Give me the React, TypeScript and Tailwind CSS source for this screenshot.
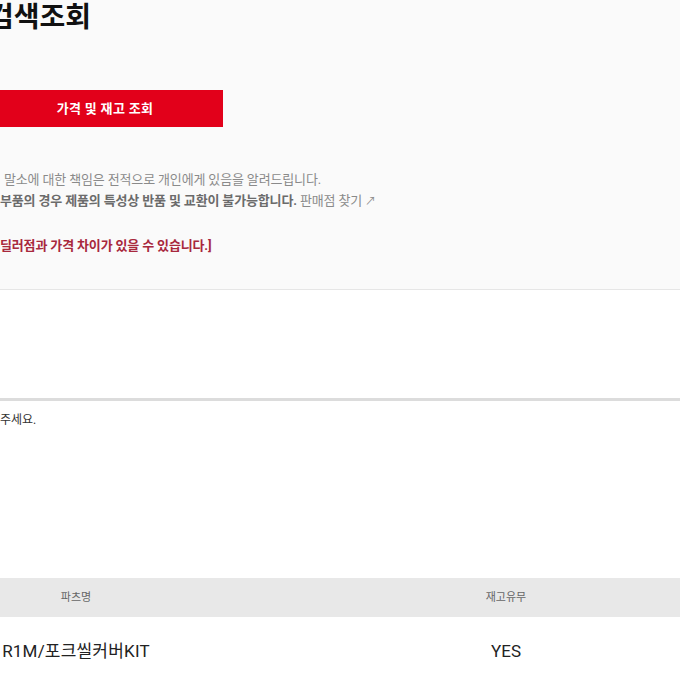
import React from 'react';

const App: React.FC = () => {
  return (
    <div className="min-h-screen overflow-hidden bg-white font-['Roboto','Noto_Sans_CJK_KR',sans-serif] text-[#222]">
      <section className="h-[290px] border-b border-[#e6e6e6] bg-[#fafafa]">
        <h1 className="-ml-[12px] whitespace-nowrap text-[28px] font-bold leading-[35px] text-[#111]">검색조회</h1>

        <button className="-ml-[13px] mt-[55px] h-[37px] w-[236px] bg-[#e2001a] text-[13px] font-bold tracking-[0.3px] text-white">
          가격 및 재고 조회
        </button>

        <div className="mt-[42px] whitespace-nowrap text-[13px] leading-[21px] tracking-[-0.15px] text-[#8a8a8a]">
          <p className="pl-[4px]">말소에 대한 책임은 전적으로 개인에게 있음을 알려드립니다.</p>
          <p>
            <span className="font-bold text-[#6b6b6b]">부품의 경우 제품의 특성상 반품 및 교환이 불가능합니다.</span>{' '}
            <a className="text-[#8a8a8a]">판매점 찾기 <span className="text-[11px]">↗</span></a>
          </p>
          <p className="mt-[23px] font-bold text-[#a8283d]">딜러점과 가격 차이가 있을 수 있습니다.]</p>
        </div>
      </section>

      <div className="h-[108px]" />

      <div className="border-t-[3px] border-[#dcdcdc] pt-[9px]">
        <p className="text-[12px] leading-[20px] text-[#333]">주세요.</p>
      </div>

      <div className="mt-[148px]">
        <div className="grid h-[39px] grid-cols-[152px_256px_196px_1fr] items-center bg-[#e8e8e8] pt-[2px] text-[11px] text-[#666]">
          <div className="text-center">파츠명</div>
          <div />
          <div className="text-center">재고유무</div>
          <div />
        </div>
        <div className="grid h-[68px] grid-cols-[152px_256px_196px_1fr] items-center pt-[2px] text-[17px] text-[#222]">
          <div className="whitespace-nowrap text-center tracking-[0.2px]">R1M/포크씰커버KIT</div>
          <div />
          <div className="text-center">YES</div>
          <div />
        </div>
      </div>
    </div>
  );
};

export default App;
